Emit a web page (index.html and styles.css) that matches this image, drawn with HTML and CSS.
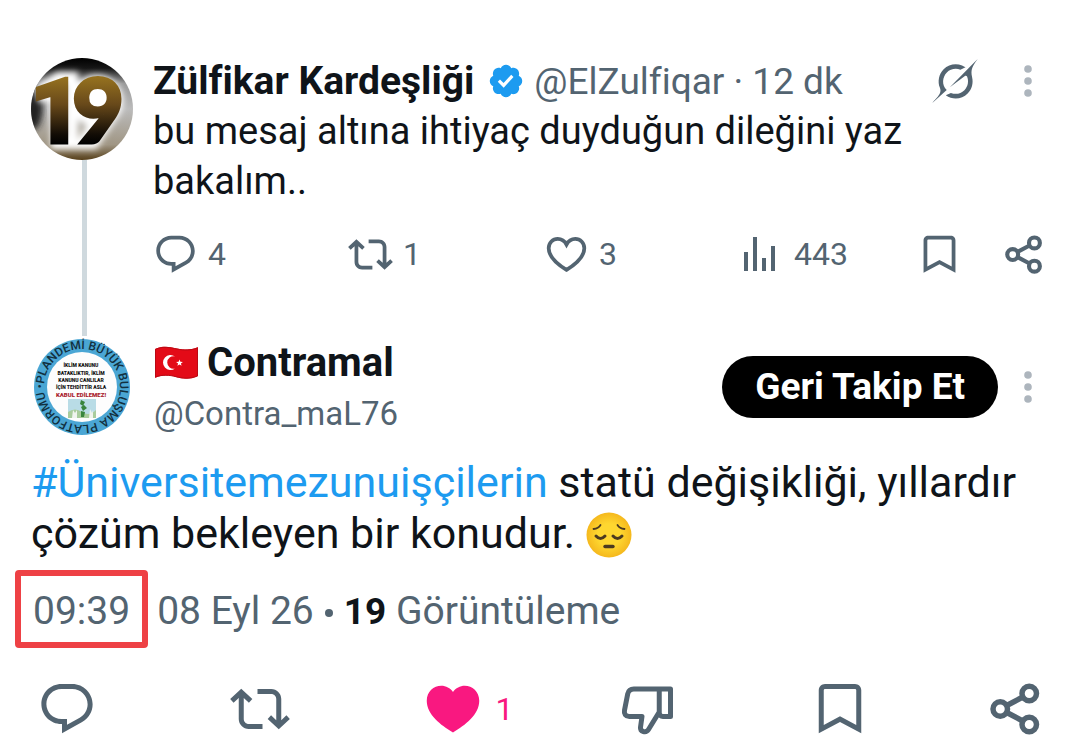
FILE: index.html
```
<!DOCTYPE html>
<html lang="tr">
<head>
<meta charset="utf-8">
<meta name="viewport" content="width=device-width, initial-scale=1">
<title>Gönderi</title>
<link rel="stylesheet" href="styles.css">
</head>
<body>
<svg class="sprite" aria-hidden="true">
  <symbol id="reply" viewBox="0 0 24 24"><path d="M1.751 10c0-4.42 3.584-8 8.005-8h4.366c4.49 0 8.129 3.64 8.129 8.13 0 2.96-1.607 5.68-4.196 7.11l-8.054 4.46v-3.69h-.067c-4.49.1-8.183-3.51-8.183-8.01zm8.005-6c-3.317 0-6.005 2.69-6.005 6 0 3.37 2.77 6.08 6.138 6.01l.351-.01h1.761v2.3l5.087-2.81c1.951-1.08 3.163-3.13 3.163-5.36 0-3.39-2.744-6.13-6.129-6.13H9.756z"/></symbol>
  <symbol id="repost" viewBox="0 0 24 24"><path d="M4.5 3.88l4.432 4.14-1.364 1.46L5.5 7.55V16c0 1.1.896 2 2 2H13v2H7.5c-2.209 0-4-1.79-4-4V7.55L1.432 9.48.068 8.02 4.5 3.88zM16.5 6H11V4h5.5c2.209 0 4 1.79 4 4v8.45l2.068-1.93 1.364 1.46-4.432 4.14-4.432-4.14 1.364-1.46 2.068 1.93V8c0-1.1-.896-2-2-2z"/></symbol>
  <symbol id="heart" viewBox="0 0 24 24"><path fill="none" stroke="currentColor" stroke-width="2" d="M12 20.2C7.6 17.5 2.5 13.7 2.5 8.7 2.5 5.7 4.7 3.7 7.3 3.7c2 0 3.7 1.1 4.7 3 1-1.9 2.7-3 4.7-3 2.6 0 4.8 2 4.8 5 0 5-5.1 8.8-9.5 11.5z"/></symbol>
  <symbol id="heart-full" viewBox="0 0 24 24"><path d="M12 21.4C7.1 18.4 1.5 14.3 1.5 8.7 1.5 5 4.3 2.7 7.3 2.7c1.900 0 3.600.9 4.700 2.500 1.100-1.600 2.800-2.500 4.700-2.500 3 0 5.800 2.300 5.800 6 0 5.600-5.600 9.700-10.500 12.700z"/></symbol>
  <symbol id="views" viewBox="0 0 32 36"><path d="M0 16h4v19H0zM9 1h4v34H9zM18 22h4v13h-4zM27 10h4v25h-4z"/></symbol>
  <symbol id="bookmark" viewBox="0 0 24 24"><path d="M3.500 4.500C3.500 3.100 4.600 2 6 2h12c1.400 0 2.500 1.100 2.500 2.500v17.200L12 17.200l-8.500 4.500V4.500zM6 4a.5.5 0 0 0-.5.5v13.900l6.500-3.500 6.500 3.500V4.500A.5.5 0 0 0 18 4H6z"/></symbol>
  <symbol id="share" viewBox="0 0 24 24"><g fill="none" stroke="currentColor" stroke-width="2.200"><circle cx="17.300" cy="5.800" r="2.900"/><circle cx="5.700" cy="12" r="2.900"/><circle cx="17.300" cy="18.200" r="2.900"/><path d="M8.300 10.600l6.400-3.400M8.300 13.400l6.400 3.400"/></g></symbol>
  <symbol id="dislike" viewBox="0 0 24 24"><path fill="none" stroke="currentColor" stroke-width="2" stroke-linejoin="round" d="M16.500 4H6.300C5.100 4 4.200 4.700 3.900 5.900L2.600 12.500c-.3 1.400.500 2.500 1.900 2.500h5.100l-.6 4.300c-.2 1.800 2.200 2.500 3.200.9L16.500 13.200zM16.500 4H21v11h-3c-.9 0-1.500-.6-1.500-1.500z"/></symbol>
  <symbol id="more" viewBox="0 0 8 32"><circle cx="4" cy="4" r="3.800"/><circle cx="4" cy="16" r="3.800"/><circle cx="4" cy="28" r="3.800"/></symbol>
  <symbol id="grok" viewBox="0 0 33 32"><path d="M12.745 20.54l10.970-8.190c.539-.4 1.307-.244 1.564.38 1.349 3.288.746 7.241-1.938 9.955-2.683 2.714-6.417 3.310-9.830 1.954l-3.728 1.745c5.347 3.697 11.840 2.782 15.898-1.324 3.219-3.255 4.216-7.692 3.284-11.693l.008.009c-1.351-5.878.332-8.227 3.782-13.031L33 0l-4.540 4.590v-.014L12.743 20.544m-2.263 1.987c-3.837-3.707-3.175-9.446.1-12.755 2.420-2.449 6.388-3.448 9.852-1.979l3.720-1.737c-.67-.49-1.530-1.017-2.515-1.387-4.455-1.854-9.789-.931-13.410 2.728-3.483 3.523-4.579 8.940-2.697 13.561 1.405 3.454-.899 5.898-3.220 8.364C1.490 30.200.666 31.074 0 32l10.478-9.466"/></symbol>
</svg>

<main class="thread">
  <article class="post parent">
    <div class="rail">
      <svg class="avatar" viewBox="0 0 102 102" role="img" aria-label="Zülfikar Kardeşliği">
        <defs>
          <linearGradient id="bg" x1="0" y1="0" x2="0" y2="1"><stop offset="0" stop-color="#000"/><stop offset=".1" stop-color="#161616"/><stop offset=".25" stop-color="#999"/><stop offset=".5" stop-color="#bbb"/><stop offset=".85" stop-color="#a09684"/><stop offset="1" stop-color="#57401a"/></linearGradient>
          <linearGradient id="gold" gradientUnits="userSpaceOnUse" x1="0" y1="20" x2="0" y2="86"><stop offset="0" stop-color="#94701f"/><stop offset=".4" stop-color="#68491a"/><stop offset=".85" stop-color="#130d06"/><stop offset="1" stop-color="#000"/></linearGradient>
          <filter id="glow" x="-20%" y="-20%" width="140%" height="140%"><feGaussianBlur stdDeviation="3"/></filter>
          <clipPath id="disc"><circle cx="51" cy="51" r="51"/></clipPath>
        </defs>
        <g clip-path="url(#disc)">
          <rect width="102" height="102" fill="url(#bg)"/>
          <ellipse cx="2" cy="48" rx="10" ry="24" fill="#222" filter="url(#glow)"/>
          <g filter="url(#glow)" fill="none" stroke="#fff" stroke-width="12"><path d="M10 32l18-12h13v65H26V38H12z"/><circle cx="66" cy="43" r="20"/><path d="M84 52L62 85H52L66 62"/></g>
          <circle cx="66" cy="42" r="12" fill="#fff"/>
          <text class="nineteen" y="85"><tspan x="25">1</tspan><tspan class="nine" x="67">9</tspan></text>
        </g>
      </svg>
      <span class="line"></span>
    </div>
    <div class="content">
      <header class="byline">
        <strong class="name">Zülfikar Kardeşliği</strong>
        <svg class="verified" viewBox="0 0 22 22" role="img" aria-label="Onaylı hesap"><path d="M20.396 11c-.018-.646-.215-1.275-.57-1.816-.354-.54-.852-.972-1.438-1.246.223-.607.27-1.264.14-1.897-.131-.634-.437-1.218-.882-1.687-.47-.445-1.053-.75-1.687-.882-.633-.13-1.290-.083-1.897.14-.273-.587-.704-1.086-1.245-1.440S11.647 1.620 11 1.604c-.646.017-1.273.213-1.813.568s-.969.854-1.240 1.440c-.608-.223-1.267-.272-1.902-.14-.635.13-1.220.436-1.690.882-.445.47-.749 1.055-.878 1.688-.13.633-.08 1.290.144 1.896-.587.274-1.087.705-1.443 1.245-.356.54-.555 1.170-.574 1.817.02.647.218 1.276.574 1.817.356.54.856.972 1.443 1.245-.224.606-.274 1.263-.144 1.896.13.634.433 1.218.877 1.688.47.443 1.054.747 1.687.878.633.132 1.290.084 1.897-.136.274.586.705 1.084 1.246 1.439.54.354 1.170.551 1.816.569.647-.016 1.276-.213 1.817-.567s.972-.854 1.245-1.440c.604.239 1.266.296 1.903.164.636-.132 1.220-.447 1.680-.907.46-.46.776-1.044.908-1.681s.075-1.299-.165-1.903c.586-.274 1.084-.705 1.439-1.246.354-.54.551-1.170.569-1.816zM9.662 14.850l-3.429-3.428 1.293-1.302 2.072 2.072 4.400-4.794 1.347 1.246z"/></svg>
        <span class="meta">@ElZulfiqar · 12 dk</span>
        <button class="icon-btn grok" aria-label="Grok"><svg><use href="#grok"/></svg></button>
        <button class="icon-btn more" aria-label="Daha fazla"><svg><use href="#more"/></svg></button>
      </header>
      <p class="text">bu mesaj altına ihtiyaç duyduğun dileğini yaz bakalım..</p>
      <div class="actions small">
        <button class="icon-btn" aria-label="Yanıtla"><svg><use href="#reply"/></svg><span>4</span></button>
        <button class="icon-btn" aria-label="Yeniden gönder"><svg><use href="#repost"/></svg><span>1</span></button>
        <button class="icon-btn" aria-label="Beğen"><svg><use href="#heart"/></svg><span>3</span></button>
        <button class="icon-btn" aria-label="Görüntüleme"><svg class="bars"><use href="#views"/></svg><span class="loose">443</span></button>
        <button class="icon-btn" aria-label="Yer işareti"><svg><use href="#bookmark"/></svg></button>
        <button class="icon-btn" aria-label="Paylaş"><svg><use href="#share"/></svg></button>
      </div>
    </div>
  </article>

  <article class="post focus">
    <header class="author">
      <div class="rail">
        <span class="line"></span>
        <svg class="avatar" viewBox="0 0 102 102" role="img" aria-label="Contramal">
          <defs><path id="ring" d="M13 51a38 38 0 0 1 76 0a38 38 0 0 1-76 0a38 38 0 0 1 76 0"/></defs>
          <circle cx="51" cy="51" r="48" fill="#4aa6d4"/>
          <circle cx="51" cy="51" r="35" fill="#fdfdfd"/>
          <text class="ring-text"><textPath href="#ring" startOffset="3">PLANDEMİ BÜYÜK BULUŞMA PLATFORMU •</textPath></text>
          <g class="slogan">
            <text x="50" y="31">İKLİM KANUNU</text>
            <text x="50" y="39">BATAKLIKTIR, İKLİM</text>
            <text x="50" y="46">KANUNU CANLILAR</text>
            <text x="50" y="53">İÇİN TEHDİTTİR ASLA</text>
            <text class="red" x="50" y="61">KABUL EDİLEMEZ!</text>
          </g>
          <rect x="37" y="63" width="28" height="19" fill="#b9dce6"/>
          <path d="M37 76q7-5 14 0t14-2v8H37z" fill="#a9cc9c"/>
          <path d="M50 64l4 2-2 4-3-2zM53 69l3 3-4 3-2-4zM50 75l4 1-1 5h-3z" fill="#39853d"/>
          <path d="M41 82l1-8 2 3 2-3v8zM58 82l1-9 2 4 1-3v8z" fill="#f0f4ee"/>
        </svg>
      </div>
      <div class="names">
        <div class="name-row">
          <svg class="flag" viewBox="0 0 45 34" role="img" aria-label="Türkiye bayrağı">
            <path fill="#e30a17" d="M1 3C9-1 16 1 23 2.500S37 4 44 1v29c-8 4-15 3-22 1S8 29 1 32z"/>
            <path fill="none" stroke="#b90914" d="M1.500 3.300C9 0 16 1.500 23 3s14 1.400 20.500-1v28c-8 3-15 2.500-21.500.7S8 28.500 1.500 31z"/>
            <path fill="#fff" d="M21 10.500a7.500 7.500 0 1 0 0 12 6.200 6.200 0 1 1 0-12z"/>
            <path fill="#fff" d="M25.500 13.500l.9 2.300 2.500.1-2 1.500.7 2.400-2.100-1.400-2.100 1.400.7-2.400-2-1.500 2.500-.1z"/>
          </svg>
          <strong class="name">Contramal</strong>
        </div>
        <span class="handle">@Contra_maL76</span>
      </div>
      <button class="follow">Geri Takip Et</button>
      <button class="icon-btn more" aria-label="Daha fazla"><svg><use href="#more"/></svg></button>
    </header>
    <p class="text large"><a href="#">#Üniversitemezunuişçilerin</a> statü değişikliği, yıllardır çözüm bekleyen bir konudur. <svg class="emoji" viewBox="0 0 46 46" role="img" aria-label="Düşünceli yüz">
      <defs><radialGradient id="face"><stop offset=".5" stop-color="#fed730"/><stop offset="1" stop-color="#f5b81d"/></radialGradient></defs>
      <circle cx="23" cy="23" r="22.500" fill="url(#face)"/>
      <g fill="none" stroke="#4b3a20" stroke-linecap="round"><path stroke-width="1.800" d="M7.500 17q5-.5 7-4M38.500 17q-5-.5-7-4"/><path stroke-width="3" d="M10 24q4.500 5 9 0M27 24q4.500 5 9 0"/><path stroke-width="3.400" d="M19 34.500h8"/></g>
    </svg></p>
    <div class="stamp"><a class="time" href="#">09:39</a><span class="date">08 Eyl 26</span><i class="dot"></i><span><b>19</b> Görüntüleme</span></div>
    <div class="actions big">
      <button class="icon-btn" aria-label="Yanıtla"><svg><use href="#reply"/></svg></button>
      <button class="icon-btn" aria-label="Yeniden gönder"><svg><use href="#repost"/></svg></button>
      <button class="icon-btn liked" aria-label="Beğenildi"><svg><use href="#heart-full"/></svg><span>1</span></button>
      <button class="icon-btn" aria-label="Beğenme"><svg><use href="#dislike"/></svg></button>
      <button class="icon-btn" aria-label="Yer işareti"><svg><use href="#bookmark"/></svg></button>
      <button class="icon-btn" aria-label="Paylaş"><svg><use href="#share"/></svg></button>
    </div>
  </article>
</main>
</body>
</html>
```
FILE: styles.css
```
* { box-sizing: border-box; }

body {
  margin: 0;
  background: #fff;
  color: #0f1419;
  font-family: Roboto, "Noto Sans", sans-serif;
}

.sprite { display: none; }
svg { display: block; flex: none; }
p { margin: 0; }
a { color: #1d9bf0; text-decoration: none; }

.thread { padding: 56px 31px 10px; }

.parent { display: flex; gap: 20px; }

.rail {
  display: flex;
  flex-direction: column;
  align-items: center;
  flex: none;
}
.parent .rail { padding-top: 2px; }

.avatar { width: 102px; height: 102px; }
.line { flex: 1; width: 5px; margin-left: 5px; background: #cfd9de; }
.content { flex: 1; min-width: 0; }

.nineteen {
  fill: url(#gold);
  stroke: url(#gold);
  stroke-width: 3px;
  font: 900 90px Roboto, sans-serif;
  text-anchor: middle;
}
.nine { font-family: Lato, sans-serif; }

.ring-text { fill: #12303f; font-size: 12px; font-weight: 500; }
.slogan { fill: #111; font-size: 5px; font-weight: 900; text-anchor: middle; }
.red { fill: #a8202c; font-size: 6px; }

.byline { display: flex; align-items: center; height: 50px; }
.name { font-size: 39px; font-weight: 700; line-height: 50px; }
.verified { width: 38px; height: 38px; margin: 0 9px 0 13px; fill: #1d9bf0; }
.meta { color: #536471; font-size: 37px; white-space: nowrap; }

.icon-btn {
  display: flex;
  align-items: center;
  padding: 0;
  border: 0;
  background: none;
  color: #536471;
  fill: currentColor;
  font: inherit;
  cursor: pointer;
}

.grok { margin-left: auto; }
.grok svg { width: 46px; height: 44px; }
.more { margin: 0 17px 0 46px; color: #adb5bd; }
.more svg { width: 8px; height: 32px; }

.text { font-size: 38px; line-height: 50px; }
.large { margin-top: 17px; font-size: 43px; line-height: 51px; }
.emoji { display: inline-block; width: 46px; height: 46px; vertical-align: -10px; }

.actions { display: grid; align-items: center; }
.small {
  grid-template-columns: 195fr 196fr 200fr 173fr 85fr auto;
  height: 96px;
  padding-right: 2px;
  font-size: 32px;
}
.small svg { width: 45px; height: 45px; }
.small span { margin-left: 10px; }
.small .bars { width: 32px; height: 36px; }
.small .loose { margin-left: 18px; }

.author { display: flex; align-items: center; }
.author .rail { align-self: stretch; }
.author .line { flex: none; height: 34px; }
.names { margin-left: 21px; padding-top: 36px; }
.name-row { display: flex; align-items: center; gap: 8px; }
.name-row .name { font-size: 40px; }
.flag { width: 45px; height: 34px; }
.handle { display: block; color: #536471; font-size: 33px; line-height: 52px; }

.follow {
  margin: 31px 0 0 auto;
  padding: 0 33px;
  border: 0;
  border-radius: 31px;
  background: #000;
  color: #fff;
  font: 700 37px/62px Roboto, "Noto Sans", sans-serif;
  cursor: pointer;
}
.follow + .more { margin-top: 31px; margin-left: 26px; }

.stamp {
  display: flex;
  align-items: baseline;
  margin: 11px 0 0 -16px;
  color: #536471;
  font-size: 39px;
}
.stamp b { color: #0f1419; font-size: 37px; }
.time {
  padding: 4px 12px 0;
  border: 6px solid #ee4145;
  border-radius: 4px;
  color: #536471;
  line-height: 62px;
}
.date { margin-left: 9px; }
.dot {
  align-self: center;
  width: 8px;
  height: 8px;
  margin: 8px 11px 0;
  border-radius: 50%;
  background: #536471;
}

.big {
  grid-template-columns: 193fr 193fr 194fr 192fr 176fr auto;
  height: 92px;
  margin-top: 15px;
  padding: 0 3px 0 6px;
  font-size: 32px;
}
.big svg { width: 60px; height: 60px; }
.big span { margin-left: 12px; }
.big .liked { color: #f91880; }
```
